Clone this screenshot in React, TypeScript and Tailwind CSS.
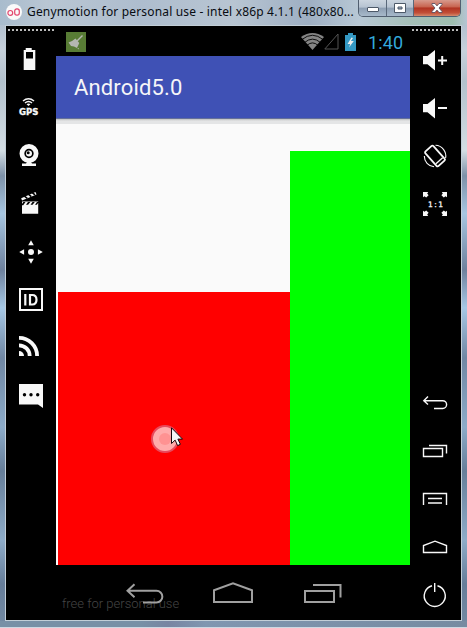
import type { ReactNode } from 'react';

function Tool({ children, className = '' }: { children: ReactNode; className?: string }) {
  return (
    <svg viewBox="0 0 24 24" className={`h-6 w-6 shrink-0 overflow-visible fill-[#f8f8f8] text-[#f8f8f8] ${className}`}>
      {children}
    </svg>
  );
}

function Line({ d }: { d: string }) {
  return <path d={d} fill="none" stroke="currentColor" strokeWidth="1.4" />;
}

function TitleBar() {
  return (
    <header className="flex h-[25px] shrink-0 items-start bg-[linear-gradient(90deg,#a9bccd_0%,#b9c6d3_10%,#aebdce_30%,#b8c5d2_50%,#9eafc3_66%,#b8c8d5_77%,#a5bfb8_88%,#9ebeb0_97%,#b5c4d3_100%)]">
      <svg viewBox="0 0 16 16" className="ml-1.5 mt-1 h-4 w-4 shrink-0">
        <circle cx="8" cy="8" r="8" fill="#fafafa" />
        <g fill="none" stroke="#e3466d" strokeWidth="1.2">
          <circle cx="4.3" cy="8.9" r="2.4" />
          <rect x="8.7" y="4.8" width="4.6" height="6.4" rx="2.2" />
        </g>
      </svg>
      <h1 className="ml-[5px] w-[327px] shrink-0 whitespace-nowrap pt-1 font-['Noto_Sans','Open_Sans',sans-serif] text-[12px] leading-4 tracking-[0.17px] text-[#080c12]">
        Genymotion for personal use - intel x86p 4.1.1 (480x80...
      </h1>
      <div className="ml-1 flex h-[17px] w-[103px] shrink-0 overflow-hidden rounded-b-[5px] border border-t-0 border-[#515f70]">
        <div className="flex w-[28px] items-center justify-center border-r border-[#59687a] bg-[linear-gradient(#cbd5df_0%,#b6c3d1_45%,#8d9eb2_50%,#a7b9ca_100%)]">
          <svg viewBox="0 0 12 5" className="mt-0.5 h-[5px] w-3"><rect x=".5" y=".5" width="11" height="4" rx=".5" fill="#fff" stroke="#4d5968" /></svg>
        </div>
        <div className="flex w-[27px] items-center justify-center border-r border-[#59687a] bg-[linear-gradient(#cbd5df_0%,#b6c3d1_45%,#8d9eb2_50%,#a7b9ca_100%)]">
          <svg viewBox="0 0 12 10" className="h-2.5 w-3"><path d="M.5 .5h11v9H.5z M4 4v2h4V4z" fill="#fff" fillRule="evenodd" stroke="#4d5968" /></svg>
        </div>
        <div className="flex flex-1 items-center justify-center bg-[linear-gradient(#d79a8d_0%,#c86450_43%,#b03322_50%,#c24e37_80%,#d58a6c_100%)]">
          <svg viewBox="0 0 12 10" className="h-2.5 w-3"><path d="M1 .5h3l2 2.4L8 .5h3v1L8 5l3 3.5v1H8L6 7.1 4 9.5H1v-1L4 5 1 1.5z" fill="#fff" stroke="#5b5263" strokeWidth=".9" /></svg>
        </div>
      </div>
    </header>
  );
}

function LeftTools() {
  return (
    <aside className="w-[50px] shrink-0 pl-px">
      <div className="ml-px mt-[3px] h-0.5 w-[46px] bg-[repeating-linear-gradient(90deg,#bbb_0_2px,transparent_2px_4px)]" />
      <div className="ml-3 mt-[17px] flex flex-col gap-6">
        <Tool><path d="M4.7 2h2V0h6v2h3.6v20H4.7z M7 4v6.5h7V4z" fillRule="evenodd" /></Tool>
        <Tool>
          <g fill="none" stroke="currentColor" strokeWidth="1.5"><path d="M4 5Q9.5 .5 15 5" /><path d="M6 7Q9.5 4 13 7" /></g>
          <path d="M7.5 8.2Q9.5 6.7 11.5 8.2L9.5 10z" />
          <text x="0" y="18.5" textLength="19.5" lengthAdjust="spacingAndGlyphs" stroke="currentColor" strokeWidth=".3" className="font-['DejaVu_Sans',sans-serif] text-[8.5px] font-bold">GPS</text>
        </Tool>
        <Tool>
          <path fillRule="evenodd" d="M10 0a9.5 9.5 0 1 0 0 19a9.5 9.5 0 1 0 0-19zM10 4.8a4.7 4.7 0 1 1 0 9.4a4.7 4.7 0 1 1 0-9.4z" />
          <circle cx="10" cy="9.5" r="3" /><circle cx="9.2" cy="8.8" r="1.5" fill="#000" /><path d="M8 18h4l1 1.5h4V22H3v-2.5h4z" />
        </Tool>
        <Tool>
          <path fillRule="evenodd" d="M3 9.5h16.2v12.2H3zM4.3 10l-1.3 2v1.2h1.2L6.5 10zM9 10l-2 2.7h2.1L11.3 10zM13.5 10l-2 2.7h2.1L15.8 10zM18 10l-2 2.7h2l1.2-2V10z" />
          <path d="M3 8.5L2.2 6.3 16.5 0l1 2.5z" /><path d="M5.4 4.2L8.3 6.4M9.4 2.2L12.3 4.6M13.2 .6L16 2.9" stroke="#000" strokeWidth="1.6" />
        </Tool>
        <Tool><circle cx="12" cy="12" r="3" /><path d="M12 .3l2.8 4.9H9.2zM12 23.7l2.8-4.9H9.2zM.2 12l4.9-2.8v5.6zM23.8 12l-4.9-2.8v5.6z" /></Tool>
        <Tool>
          <path d="M1 1h22v21H1z" fill="none" stroke="currentColor" strokeWidth="2" />
          <path d="M6.3 6v11.5M11 7h2.2Q17.5 7 17.5 11.7T13.2 16.5H11z" fill="none" stroke="currentColor" strokeWidth="2.2" />
        </Tool>
        <Tool>
          <g fill="none" stroke="currentColor" strokeWidth="3.8"><path d="M0 1.9A18.1 18.1 0 0 1 18.1 20" /><path d="M0 9.3A10.7 10.7 0 0 1 10.7 20" /></g>
          <path d="M0 15a5 5 0 0 1 5 5H0z" />
        </Tool>
        <Tool><path d="M0 0h24v24l-5-3.5H0z" /><g fill="#000"><circle cx="5.5" cy="10.7" r="1.7" /><circle cx="12" cy="10.7" r="1.7" /><circle cx="18.7" cy="10.7" r="1.7" /></g></Tool>
      </div>
    </aside>
  );
}

function RightTools() {
  return (
    <aside className="flex w-[51px] shrink-0 flex-col">
      <div className="ml-0.5 mt-[3px] h-0.5 w-[46px] bg-[repeating-linear-gradient(90deg,#bbb_0_2px,transparent_2px_4px)]" />
      <div className="ml-[13px] mt-[17px] flex flex-col gap-6">
        <Tool><path d="M0 8h4.5L12 2v20.5L4.5 16.3H0zM18.2 8h2v3.5H24v2h-3.8V17h-2v-3.5H15v-2h3.2z" /></Tool>
        <Tool><path d="M0 8h4.5L12 2v20.5L4.5 16.3H0zM15 11h9v2h-9z" /></Tool>
        <Tool>
          <g transform="rotate(-42 12 12)" fill="none" stroke="currentColor"><rect x="6.6" y="2.2" width="10.8" height="19.6" rx="1.5" strokeWidth="1.8" /><path d="M7.5 18.4h9" strokeWidth="1.4" /></g>
          <path d="M12.5 1.2A10.8 10.8 0 0 1 22.6 14M1.3 12A10.8 10.8 0 0 0 11 22.8" fill="none" stroke="currentColor" strokeWidth="1.1" />
        </Tool>
        <Tool>
          {[0, 90, 180, 270].map((angle) => <path key={angle} transform={`rotate(${angle} 12 12)`} d="M0 0h5.2L4.2 1.5 5.6 3.2 3.2 5.6 1.5 4.2 0 5.2z" />)}
          <text x="5" y="15" textLength="15" stroke="currentColor" strokeWidth=".3" className="font-['DejaVu_Sans',sans-serif] text-[7.5px]">1:1</text>
        </Tool>
      </div>
      <div className="ml-[13px] mt-[175px] flex flex-col gap-6">
        <Tool><Line d="M5 5.5L.8 9.7 5 13.5M1 9.7h18.7a3.7 3.7 0 0 1 0 7.8H11" /></Tool>
        <Tool><Line d="M.5 9.5h19V17.5H.5zM6 6.5h17.5v8" /></Tool>
        <Tool><Line d="M.5 18V6.5h23V18M5 11.5h14M5 16h14" /></Tool>
        <Tool><Line d="M.5 17.5v-7L12 6.2l11.5 4.3v7z" /></Tool>
        <Tool><Line d="M9 2.8a10.5 10.5 0 1 0 5.5 0M11.7 0v9" /></Tool>
      </div>
    </aside>
  );
}

function StatusBar() {
  return (
    <div className="flex h-[30px] shrink-0 items-center pl-2.5 pr-[7px] pt-px">
      <svg viewBox="0 0 20 20" className="h-5 w-5"><path fill="#587c35" d="M0 0h20v20H0z" /><path d="M16.5 3.5L11 9" stroke="#b4b7b1" strokeWidth="1.5" /><path d="M9.5 6.5l3.8 4.5L11 16 8 14.5 5 14l-2.5-3.5L6 9z" fill="#b4b7b1" /><path d="M12 16l.5 1.2" stroke="#b4b7b1" /></svg>
      <div className="ml-auto flex items-center">
        <svg viewBox="0 0 23 17" className="h-[17px] w-[23px]">
          <path d="M0 4Q11.5-4 23 4L11.5 17z" fill="#858585" />
          <path d="M1 6.5Q11.5-2 22 6.5M3.5 9.5Q11.5 2.8 19.5 9.5M6 12.3Q11.5 7.5 17 12.3" fill="none" stroke="#000" strokeWidth=".9" />
        </svg>
        <svg viewBox="0 0 15 17" className="h-[17px] w-[15px]"><path d="M.8 16L14 1v15z" fill="none" stroke="#555" strokeWidth="1" /></svg>
        <svg viewBox="0 0 11 18" className="ml-1.5 h-[18px] w-[11px]"><path d="M3 0h5v2h3v16H0V2h3z" fill="#3498c3" /><path d="M6.5 4.5L2.5 11h2.7L4 14.5 8.8 8H5.9L8 5z" fill="#eee" /></svg>
        <span className="ml-3 mt-0.5 w-[35px] whitespace-nowrap font-[Roboto,sans-serif] text-[18px] leading-5 tracking-[0.1px] text-[#33a9dc]">1:40</span>
      </div>
    </div>
  );
}

function NavigationBar() {
  return (
    <nav className="relative h-[55px] shrink-0">
      <span className="absolute left-1.5 top-[31px] whitespace-nowrap font-[Roboto,sans-serif] text-[13px] font-light leading-4 text-[#454545]">free for personal use</span>
      <div className="flex items-start pl-[70px] pt-[17px] text-[#a0a0a0]">
        <svg viewBox="0 0 38 23" className="relative h-[23px] w-[38px]"><path d="M8.5 2.3L1.5 8.8l7 6.5M2 8.8h28.5a5.8 5.8 0 0 1 0 11.7H17" fill="none" stroke="currentColor" strokeWidth="2" /></svg>
        <svg viewBox="0 0 41 23" className="ml-12 h-[23px] w-[41px]"><path d="M2 20V8.2L21 1.3l19 6.9V20z" fill="none" stroke="currentColor" strokeWidth="2" /></svg>
        <svg viewBox="0 0 39 23" className="ml-[50px] h-[23px] w-[39px]"><path d="M2 9h29v11H2zM10 3h27.5v12.5" fill="none" stroke="currentColor" strokeWidth="2" /></svg>
      </div>
    </nav>
  );
}

export default function App() {
  return (
    <div className="flex h-[628px] w-[467px] flex-col overflow-hidden bg-[linear-gradient(180deg,#9eb0c4_0%,#c7d1db_8%,#b3c1cc_13%,#d3dde3_24%,#7d91a8_28%,#a7c6e1_34%,#6e819d_43%,#a6c8e5_49%,#7087a3_57%,#8cabc8_68%,#667e99_75%,#8eacc8_86%,#667d99_93%,#748ba3_100%)]">
      <TitleBar />
      <main className="mx-[5px] flex h-[596px] shrink-0 border border-[#c2ced7] bg-black">
        <LeftTools />
        <section className="flex w-[354px] shrink-0 flex-col">
          <StatusBar />
          <header className="h-[63px] shrink-0 border-b border-[#65709a] bg-[#3f51b5] pl-[18px] pt-[18px] font-[Roboto,sans-serif] text-[22px] leading-7 tracking-[0.15px] text-[#f5f5f8]">Android5.0</header>
          <div className="h-[5px] shrink-0 bg-[linear-gradient(#bfc0c0,#e4e5e6_40%,#e4e5e6)]" />
          <div className="flex h-[441px] shrink-0 items-end bg-[#fafafa]">
            <div className="relative ml-0.5 h-[273px] w-[232px] bg-[#f00]">
              <div className="absolute left-[93px] top-[133px] flex h-7 w-7 items-center justify-center rounded-full border-2 border-[#e84a5c] bg-[#ffabab]"><span className="h-3 w-3 rounded-full bg-[#ff9292]" /></div>
              <svg viewBox="0 0 13 20" className="absolute left-[113px] top-[135px] h-5 w-[13px]"><path d="M.5.8v15.7l3.6-3.4 2.5 5.5 2.8-1.3-2.5-5.2h4.6z" fill="#f6f6f6" stroke="#18080d" /></svg>
            </div>
            <div className="h-[414px] flex-1 bg-[#0f0]" />
          </div>
          <NavigationBar />
        </section>
        <RightTools />
      </main>
      <footer className="h-[7px] shrink-0 border-b border-[#ccd9e3] bg-[linear-gradient(90deg,#7890a6,#7890a6_30%,#7885a2_36%,#8096b0_44%,#768ba1)]" />
    </div>
  );
}
